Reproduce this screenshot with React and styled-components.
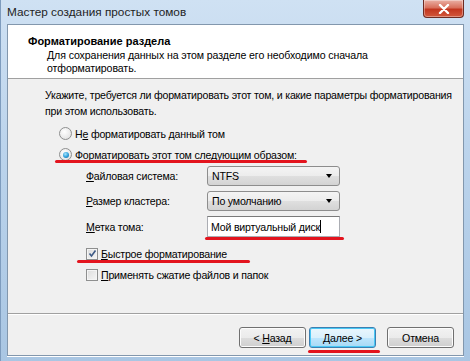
import styled, { createGlobalStyle, css } from 'styled-components'

const Global = createGlobalStyle`
  html, body { margin: 0; padding: 0; background: #cfe0f1; }
  body {
    font-family: "Liberation Sans", Arial, sans-serif;
    font-size: 10.6px;
    letter-spacing: -0.2px;
    color: #000;
  }
  * { box-sizing: border-box; }
`

export default function App() {
  return (
    <>
      <Global />
      <Window>
        <TitleBar>
          <Title>Мастер создания простых томов</Title>
          <CloseButton>
            <svg width="12" height="10" viewBox="0 0 12 10">
              <path d="M2 1 L10 9 M10 1 L2 9" stroke="#fff" strokeWidth="2.4" strokeLinecap="round" />
            </svg>
          </CloseButton>
        </TitleBar>

        <Client>
          <Header>
            <HeaderTitle>Форматирование раздела</HeaderTitle>
            <HeaderText>
              <div>Для сохранения данных на этом разделе его необходимо сначала</div>
              <div>отформатировать.</div>
            </HeaderText>
          </Header>

          <Body>
            <Intro>
              <div>Укажите, требуется ли форматировать этот том, и какие параметры форматирования</div>
              <div>при этом использовать.</div>
            </Intro>

            <OptionRow $indent={14}>
              <Radio />
              <span>Н<u>е</u> форматировать данный том</span>
            </OptionRow>
            <OptionRow $indent={14}>
              <Radio $checked />
              <span>Ф<u>о</u>рматировать этот том следующим образом:</span>
              <RedLine $top={16} $left={-4} $width={252} />
            </OptionRow>

            <Form>
              <Label><u>Ф</u>айловая система:</Label>
              <Select>NTFS<Arrow /></Select>
              <Label><u>Р</u>азмер кластера:</Label>
              <Select>По умолчанию<Arrow /></Select>
              <Label><u>М</u>етка тома:</Label>
              <Field>
                Мой виртуальный диск<Caret />
                <RedLine $top={20} $left={-3} $width={139} />
              </Field>
            </Form>

            <OptionRow $indent={41} $top={6}>
              <Check $checked>
                <svg width="9" height="9" viewBox="0 0 9 9">
                  <path d="M1.5 4.5 L3.5 7 L7.5 1.5" stroke="#3d5a86" strokeWidth="1.6" fill="none" />
                </svg>
              </Check>
              <span><u>Б</u>ыстрое форматирование</span>
              <RedLine $top={17} $left={-9} $width={173} />
            </OptionRow>
            <OptionRow $indent={41}>
              <Check />
              <span><u>П</u>рименять сжатие файлов и папок</span>
            </OptionRow>
          </Body>

          <Footer>
            <Button><span>&lt; <u>Н</u>азад</span></Button>
            <Button $default>
              <span><u>Д</u>алее &gt;</span>
              <RedLine $top={22} $left={-2} $width={72} />
            </Button>
            <Button $gap={11}>Отмена</Button>
          </Footer>
        </Client>
      </Window>
    </>
  )
}

const Window = styled.div`
  width: 470px;
  height: 361px;
  display: flex;
  flex-direction: column;
  background: linear-gradient(180deg, #cfe1f3 0%, #bcd4ec 40%, #a9c6e3 100%);
  border-left: 1px solid #7e9cbe;
  overflow: hidden;
`

const TitleBar = styled.div`
  height: 24px;
  flex: none;
  display: flex;
  justify-content: space-between;
  align-items: flex-start;
  padding-left: 6px;
`

const Title = styled.div`
  line-height: 24px;
  font-size: 11.8px;
  letter-spacing: 0;
  color: #1e1e1e;
`

const CloseButton = styled.div`
  width: 41px;
  height: 18px;
  margin-right: 6px;
  display: flex;
  align-items: center;
  justify-content: center;
  border: 1px solid #6d2b22;
  border-top: none;
  border-radius: 0 0 4px 4px;
  background: linear-gradient(180deg, #eab1a5 0%, #d8705c 45%, #c2361f 55%, #d2583c 100%);
  box-shadow: inset 0 0 0 1px rgba(255, 255, 255, 0.35);
`

const Client = styled.div`
  flex: 1;
  display: flex;
  flex-direction: column;
  margin: 0 6px 5px 6px;
  border: 1px solid #8297ad;
  background: #f0f0f0;
  box-shadow: 0 1px 0 #ffffff;
`

const Header = styled.div`
  height: 54px;
  flex: none;
  background: #ffffff;
  border-bottom: 1px solid #a0a0a0;
  padding: 9px 0 0 20px;
`

const HeaderTitle = styled.div`
  font-weight: 700;
  font-size: 11px;
  letter-spacing: 0;
  line-height: 14px;
  white-space: nowrap;
`

const HeaderText = styled.div`
  padding: 1px 0 0 19px;
  line-height: 12.5px;
  letter-spacing: -0.1px;
  white-space: nowrap;
`

const Body = styled.div`
  flex: 1;
  padding: 8px 0 0 37px;
`

const Intro = styled.div`
  line-height: 16px;
  white-space: nowrap;
  margin-bottom: 4px;
`

const OptionRow = styled.div`
  position: relative;
  height: 21px;
  display: flex;
  align-items: center;
  gap: 3px;
  margin-left: ${p => p.$indent}px;
  margin-top: ${p => p.$top || 0}px;
  white-space: nowrap;
`

const Radio = styled.span`
  width: 13px;
  height: 13px;
  flex: none;
  border-radius: 50%;
  border: 1px solid #8e8f8f;
  background: radial-gradient(circle at 40% 35%, #ffffff 0%, #e6e6e6 70%, #d5d5d5 100%);
  position: relative;
  ${p => p.$checked && css`
    &::after {
      content: '';
      position: absolute;
      left: 2.5px;
      top: 2.5px;
      width: 6px;
      height: 6px;
      border-radius: 50%;
      background: radial-gradient(circle at 40% 35%, #a8e3fb 0%, #2b9fdb 55%, #16588b 100%);
    }
  `}
`

const Check = styled.span`
  width: 12px;
  height: 12px;
  flex: none;
  border: 1px solid #8e8f8f;
  background: linear-gradient(135deg, #dcdcdc 0%, #f6f6f6 100%);
  box-shadow: inset 0 0 0 1px #f4f4f4;
  display: flex;
  align-items: center;
  justify-content: center;
`

const Form = styled.div`
  display: grid;
  grid-template-columns: 121px 133px;
  row-gap: 5px;
  margin: 1px 0 0 41px;
  align-items: center;
`

const Label = styled.div`
  white-space: nowrap;
`

const Select = styled.div`
  position: relative;
  height: 20px;
  display: flex;
  align-items: center;
  padding-left: 4px;
  border: 1px solid #8d8d8d;
  border-radius: 3px;
  background: linear-gradient(180deg, #f4f4f4 0%, #ececec 50%, #dfdfdf 51%, #d3d3d3 100%);
`

const Arrow = styled.span`
  position: absolute;
  right: 7px;
  top: 7px;
  width: 0;
  height: 0;
  border-left: 3.5px solid transparent;
  border-right: 3.5px solid transparent;
  border-top: 4px solid #000;
`

const Field = styled.div`
  position: relative;
  height: 21px;
  display: flex;
  align-items: center;
  padding-left: 3px;
  border: 1px solid #abadb3;
  border-top-color: #7a7a7a;
  background: #ffffff;
  white-space: nowrap;
`

const Caret = styled.span`
  width: 1px;
  height: 13px;
  background: #000;
`

const RedLine = styled.span`
  position: absolute;
  top: ${p => p.$top}px;
  left: ${p => p.$left}px;
  width: ${p => p.$width}px;
  height: 3px;
  border-radius: 2px;
  background: #e3141e;
  pointer-events: none;
`

const Footer = styled.div`
  height: 42px;
  flex: none;
  display: flex;
  justify-content: flex-end;
  align-items: flex-start;
  padding: 13px 9px 0 0;
  border-top: 1px solid #a0a0a0;
  box-shadow: inset 0 1px 0 #ffffff;
`

const Button = styled.div`
  position: relative;
  width: 67px;
  height: 21px;
  margin-left: ${p => (p.$gap ? p.$gap : 3)}px;
  display: flex;
  align-items: center;
  justify-content: center;
  border: 1px solid #707070;
  border-radius: 3px;
  background: linear-gradient(180deg, #f2f2f2 0%, #ebebeb 50%, #dddddd 51%, #cfcfcf 100%);
  box-shadow: inset 0 0 0 1px #fcfcfc;
  ${p => p.$default && css`
    border-color: #3c7fb1;
    background: linear-gradient(180deg, #eaf6fd 0%, #d9f0fc 50%, #bee6fd 51%, #a7d9f5 100%);
    box-shadow: inset 0 0 0 1px #48c8f5;
  `}
`
